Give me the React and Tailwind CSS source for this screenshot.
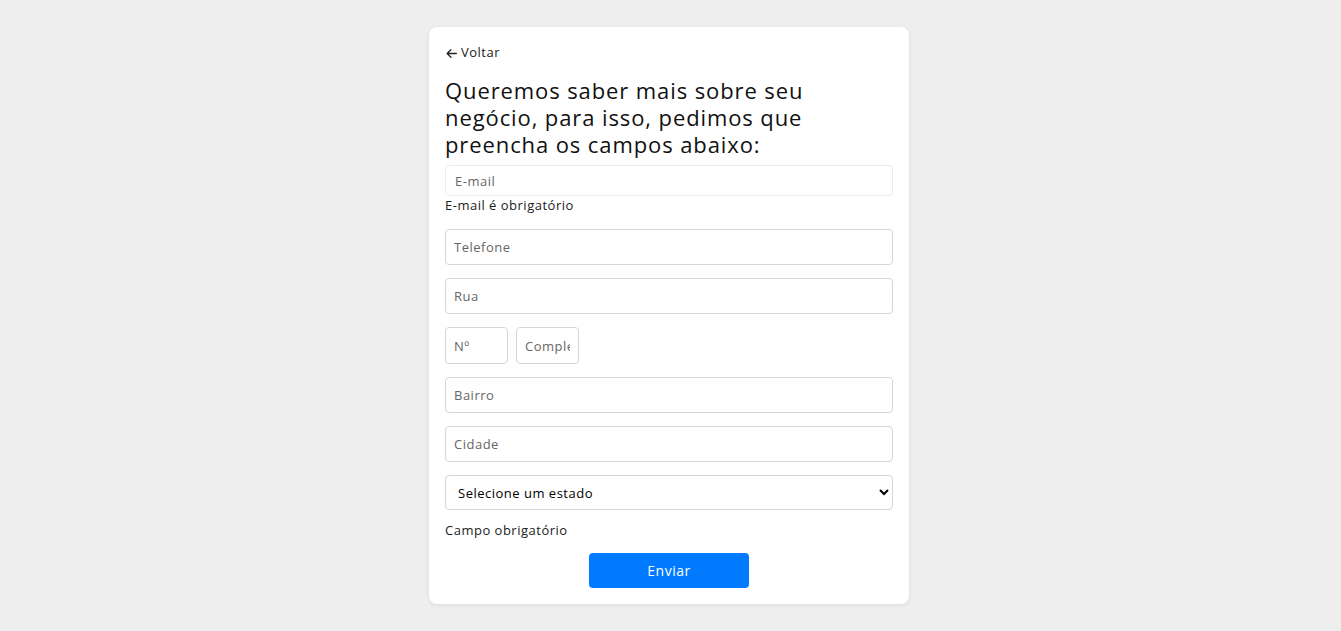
import React from "react";

const font = { fontFamily: '"Open Sans", "Liberation Sans", sans-serif' };

function Field({ placeholder, className = "" }) {
  return (
    <input
      type="text"
      placeholder={placeholder}
      className={`h-9 rounded border border-[#d6d6d6] bg-white px-2 text-[13px] tracking-[0.5px] text-[#333] placeholder:text-[#666] outline-none ${className}`}
    />
  );
}

export default function App() {
  return (
    <div className="min-h-[631px] w-full bg-[#eeeeee] pt-[27px] pr-[3px]" style={font}>
      <div className="mx-auto flex w-[480px] flex-col rounded-lg bg-white px-4 pt-4 pb-4 tracking-[0.5px] shadow-[0_1px_4px_rgba(0,0,0,0.08)]">
        <a href="#" className="flex h-5 items-center gap-[3px] text-[13px] text-[#222]">
          <svg width="13" height="13" viewBox="0 0 24 24" fill="none" stroke="currentColor" strokeWidth="2.4" strokeLinecap="round" strokeLinejoin="round">
            <path d="M21 12H4M11 5l-7 7 7 7" />
          </svg>
          Voltar
        </a>

        <h1 className="mt-[14px] mb-[7px] text-[22px] leading-[27px] font-medium tracking-[0.9px] text-[#111]">
          Queremos saber mais sobre seu negócio, para isso, pedimos que preencha os campos abaixo:
        </h1>

        <input
          type="email"
          placeholder="E-mail"
          className="h-[31px] rounded border border-[#ebebeb] bg-white px-[9px] text-[13px] tracking-[0.5px] placeholder:text-[#666] outline-none"
        />
        <p className="mb-[15px] h-[18px] text-[13px] leading-[18px] text-[#1c1c1c]">E-mail é obrigatório</p>

        <div className="flex flex-col gap-[13px]">
          <Field placeholder="Telefone" />
          <Field placeholder="Rua" />
          <div className="flex gap-2">
            <Field placeholder="Nº" className="w-[63px] h-[37px]" />
            <Field placeholder="Complemento" className="w-[63px] h-[37px]" />
          </div>
          <Field placeholder="Bairro" />
          <Field placeholder="Cidade" />
          <select className="h-[35px] rounded border border-[#d6d6d6] bg-white px-2 text-[13px] tracking-[0.5px] text-black outline-none">
            <option>Selecione um estado</option>
          </select>
        </div>

        <p className="mt-[10px] h-5 text-[13px] leading-5 text-[#1c1c1c]">Campo obrigatório</p>

        <button className="mx-auto mt-[13px] h-[35px] w-[160px] rounded bg-[#007bff] text-[14px] tracking-[0.5px] text-white">
          Enviar
        </button>
      </div>
    </div>
  );
}
